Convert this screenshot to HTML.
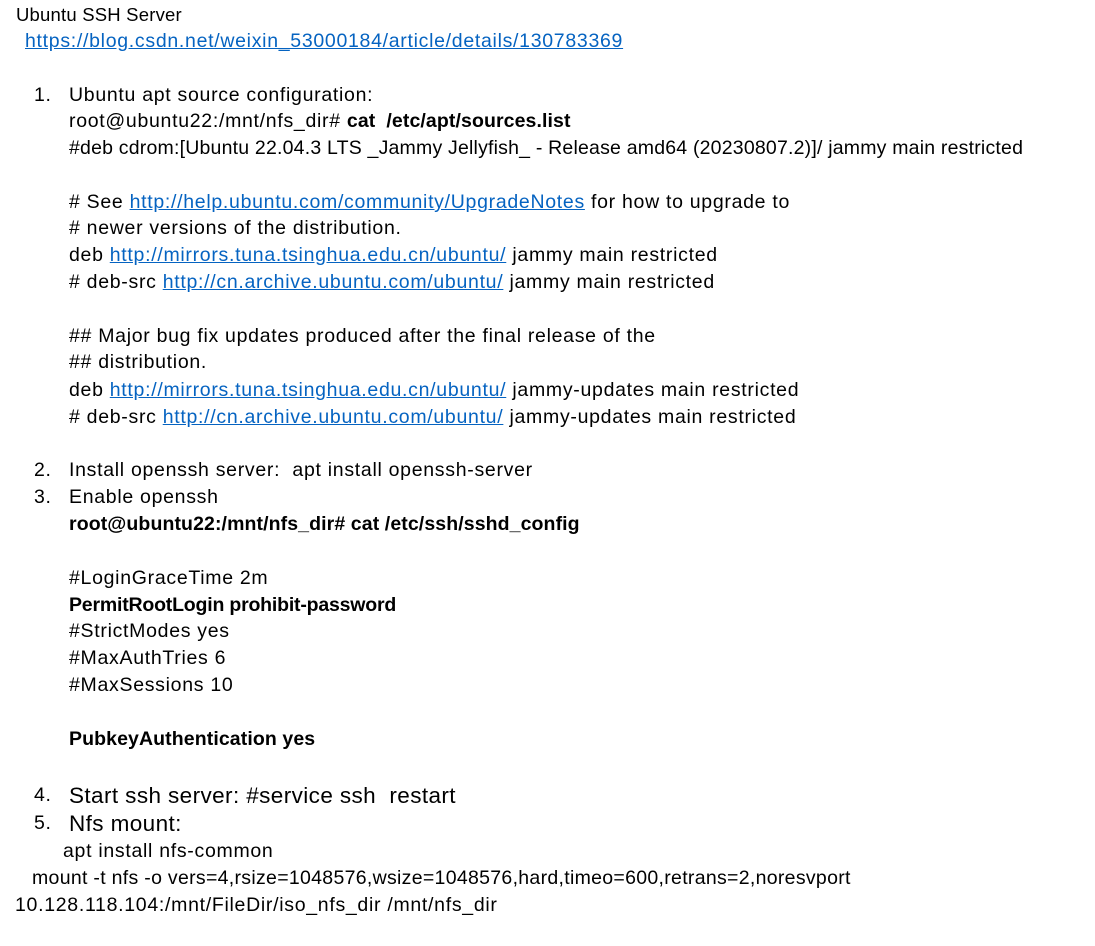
<!DOCTYPE html>
<html><head><meta charset="utf-8"><style>
body{margin:0;background:#fff;width:1095px;height:946px;position:relative;overflow:hidden;font-family:"Liberation Sans",sans-serif;font-size:19.5px;letter-spacing:0.7px;color:#000}
.l{position:absolute;white-space:nowrap;line-height:27px;height:27px}
a{color:#0563c1;text-decoration:underline}
b{font-weight:bold;letter-spacing:0.1px}
.big{font-size:22.5px;letter-spacing:0.4px}
</style></head><body>
<div class="l" style="left:16px;top:1px;font-size:18.5px;letter-spacing:0.2px">Ubuntu SSH Server</div>
<div class="l" style="left:25px;top:28px"><a>https://blog.csdn.net/weixin_53000184/article/details/130783369</a></div>
<div class="l" style="left:34px;top:82px">1.</div>
<div class="l" style="left:69px;top:82px">Ubuntu apt source configuration:</div>
<div class="l" style="left:69px;top:108px">root@ubuntu22:/mnt/nfs_dir# <b>cat&nbsp; /etc/apt/sources.list</b></div>
<div class="l" style="left:69px;top:135px;letter-spacing:0.2px">#deb cdrom:[Ubuntu 22.04.3 LTS _Jammy Jellyfish_ - Release amd64 (20230807.2)]/ jammy main restricted</div>
<div class="l" style="left:69px;top:189px"># See <a>http://help.ubuntu.com/community/UpgradeNotes</a> for how to upgrade to</div>
<div class="l" style="left:69px;top:215px"># newer versions of the distribution.</div>
<div class="l" style="left:69px;top:242px">deb <a>http://mirrors.tuna.tsinghua.edu.cn/ubuntu/</a> jammy main restricted</div>
<div class="l" style="left:69px;top:269px"># deb-src <a>http://cn.archive.ubuntu.com/ubuntu/</a> jammy main restricted</div>
<div class="l" style="left:69px;top:323px">## Major bug fix updates produced after the final release of the</div>
<div class="l" style="left:69px;top:349px">## distribution.</div>
<div class="l" style="left:69px;top:377px">deb <a>http://mirrors.tuna.tsinghua.edu.cn/ubuntu/</a> jammy-updates main restricted</div>
<div class="l" style="left:69px;top:404px"># deb-src <a>http://cn.archive.ubuntu.com/ubuntu/</a> jammy-updates main restricted</div>
<div class="l" style="left:34px;top:457px">2.</div>
<div class="l" style="left:69px;top:457px">Install openssh server:&nbsp; apt install openssh-server</div>
<div class="l" style="left:34px;top:484px">3.</div>
<div class="l" style="left:69px;top:484px">Enable openssh</div>
<div class="l" style="left:69px;top:511px"><b>root@ubuntu22:/mnt/nfs_dir# cat /etc/ssh/sshd_config</b></div>
<div class="l" style="left:69px;top:565px">#LoginGraceTime 2m</div>
<div class="l" style="left:69px;top:592px"><b style="letter-spacing:-0.2px">PermitRootLogin prohibit-password</b></div>
<div class="l" style="left:69px;top:618px">#StrictModes yes</div>
<div class="l" style="left:69px;top:645px">#MaxAuthTries 6</div>
<div class="l" style="left:69px;top:672px">#MaxSessions 10</div>
<div class="l" style="left:69px;top:726px"><b>PubkeyAuthentication yes</b></div>
<div class="l" style="left:34px;top:782px">4.</div>
<div class="l big" style="left:69px;top:782px">Start ssh server: #service ssh&nbsp; restart</div>
<div class="l" style="left:34px;top:810px">5.</div>
<div class="l big" style="left:69px;top:810px">Nfs mount:</div>
<div class="l" style="left:63px;top:838px">apt install nfs-common</div>
<div class="l" style="left:32px;top:865px;letter-spacing:0.3px">mount -t nfs -o vers=4,rsize=1048576,wsize=1048576,hard,timeo=600,retrans=2,noresvport</div>
<div class="l" style="left:15px;top:892px;letter-spacing:0.7px">10.128.118.104:/mnt/FileDir/iso_nfs_dir /mnt/nfs_dir</div>
</body></html>
